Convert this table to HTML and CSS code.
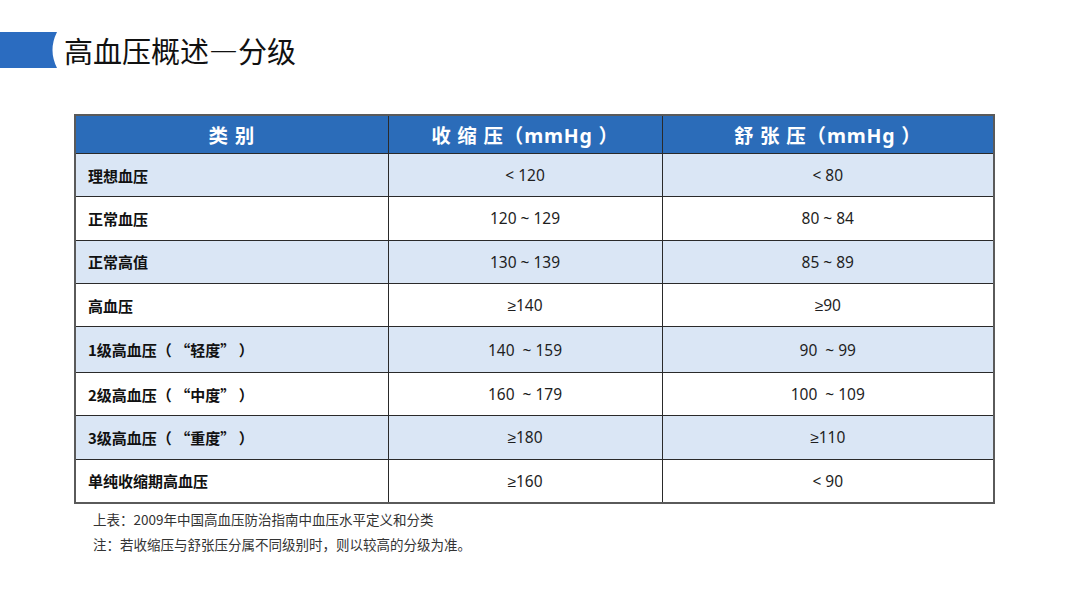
FILE: index.html
```html
<!DOCTYPE html>
<html lang="zh-CN">
<head>
<meta charset="utf-8">
<title>高血压概述—分级</title>
<link rel="stylesheet" href="styles.css">
</head>
<body>
<header class="page-head">
  <svg class="tab" width="58" height="36" viewBox="0 0 58 36"><path d="M0 0 H57 Q48 18 57 36 H0 Z" fill="#2b6cc0"/></svg>
  <h1 class="title">高血压概述—分级</h1>
</header>
<main class="content">
  <table class="grade">
    <colgroup><col class="c1"><col class="c2"><col class="c3"></colgroup>
    <thead>
      <tr><th>类 别</th><th>收 缩 压（mmHg ）</th><th>舒 张 压（mmHg ）</th></tr>
    </thead>
    <tbody>
      <tr class="alt"><td>理想血压</td><td>&lt; 120</td><td>&lt; 80</td></tr>
      <tr><td>正常血压</td><td>120 ~ 129</td><td>80 ~ 84</td></tr>
      <tr class="alt"><td>正常高值</td><td>130 ~ 139</td><td>85 ~ 89</td></tr>
      <tr><td>高血压</td><td>≥140</td><td>≥90</td></tr>
      <tr class="alt tall"><td>1级高血压（ “轻度” ）</td><td>140&nbsp; ~ 159</td><td>90&nbsp; ~ 99</td></tr>
      <tr><td>2级高血压（ “中度” ）</td><td>160&nbsp; ~ 179</td><td>100&nbsp; ~ 109</td></tr>
      <tr class="alt"><td>3级高血压（ “重度” ）</td><td>≥180</td><td>≥110</td></tr>
      <tr><td>单纯收缩期高血压</td><td>≥160</td><td>&lt; 90</td></tr>
    </tbody>
  </table>
  <div class="notes">
    <p>上表：2009年中国高血压防治指南中血压水平定义和分类</p>
    <p>注：若收缩压与舒张压分属不同级别时，则以较高的分级为准。</p>
  </div>
</main>
</body>
</html>
```
FILE: styles.css
```css
html, body {
  margin: 0;
  padding: 0;
  background: #ffffff;
}
body {
  width: 1080px;
  height: 608px;
  overflow: hidden;
  font-family: "Noto Sans CJK SC", "Noto Sans", "Liberation Sans", sans-serif;
  color: #1a1a1a;
}
.page-head {
  display: flex;
  align-items: center;
  gap: 6px;
  padding-top: 32px;
  height: 36px;
}
.tab {
  display: block;
  flex: none;
}
.title {
  margin: 0;
  font-size: 29px;
  font-weight: 400;
  line-height: 36px;
  color: #111;
}
.content {
  padding: 46px 0 0 74px;
}
.grade {
  border-collapse: collapse;
  width: 919px;
  table-layout: fixed;
  border: 2px solid #5a5a5a;
}
.c1 { width: 313px; }
.c2 { width: 274px; }
.c3 { width: 332px; }
.grade th {
  background: #2b6cb9;
  color: #ffffff;
  font-family: "Noto Sans", "Noto Sans CJK SC", sans-serif;
  font-size: 19.5px;
  font-weight: 700;
  height: 37px;
  padding: 0;
  border: 1.5px solid #2a2a2a;
  text-align: center;
  letter-spacing: 0.8px;
}
.grade td {
  height: 42.3px;
  padding: 0;
  border: 1.5px solid #2a2a2a;
  font-family: "Noto Sans", "Liberation Sans", "Noto Sans CJK SC", sans-serif;
  font-size: 15.5px;
  text-align: center;
  color: #1e1e1e;
}
.grade td:first-child {
  font-family: "Noto Sans CJK SC", sans-serif;
  font-size: 15px;
  text-align: left;
  padding-left: 12px;
  font-weight: 700;
  color: #111;
}
.grade tr.alt td {
  background: #dae6f5;
}
.grade tr.tall td {
  height: 44.8px;
}
.notes {
  padding: 3px 0 0 19px;
}
.notes p {
  margin: 0;
  font-size: 13.5px;
  line-height: 25px;
  color: #333;
}
```
